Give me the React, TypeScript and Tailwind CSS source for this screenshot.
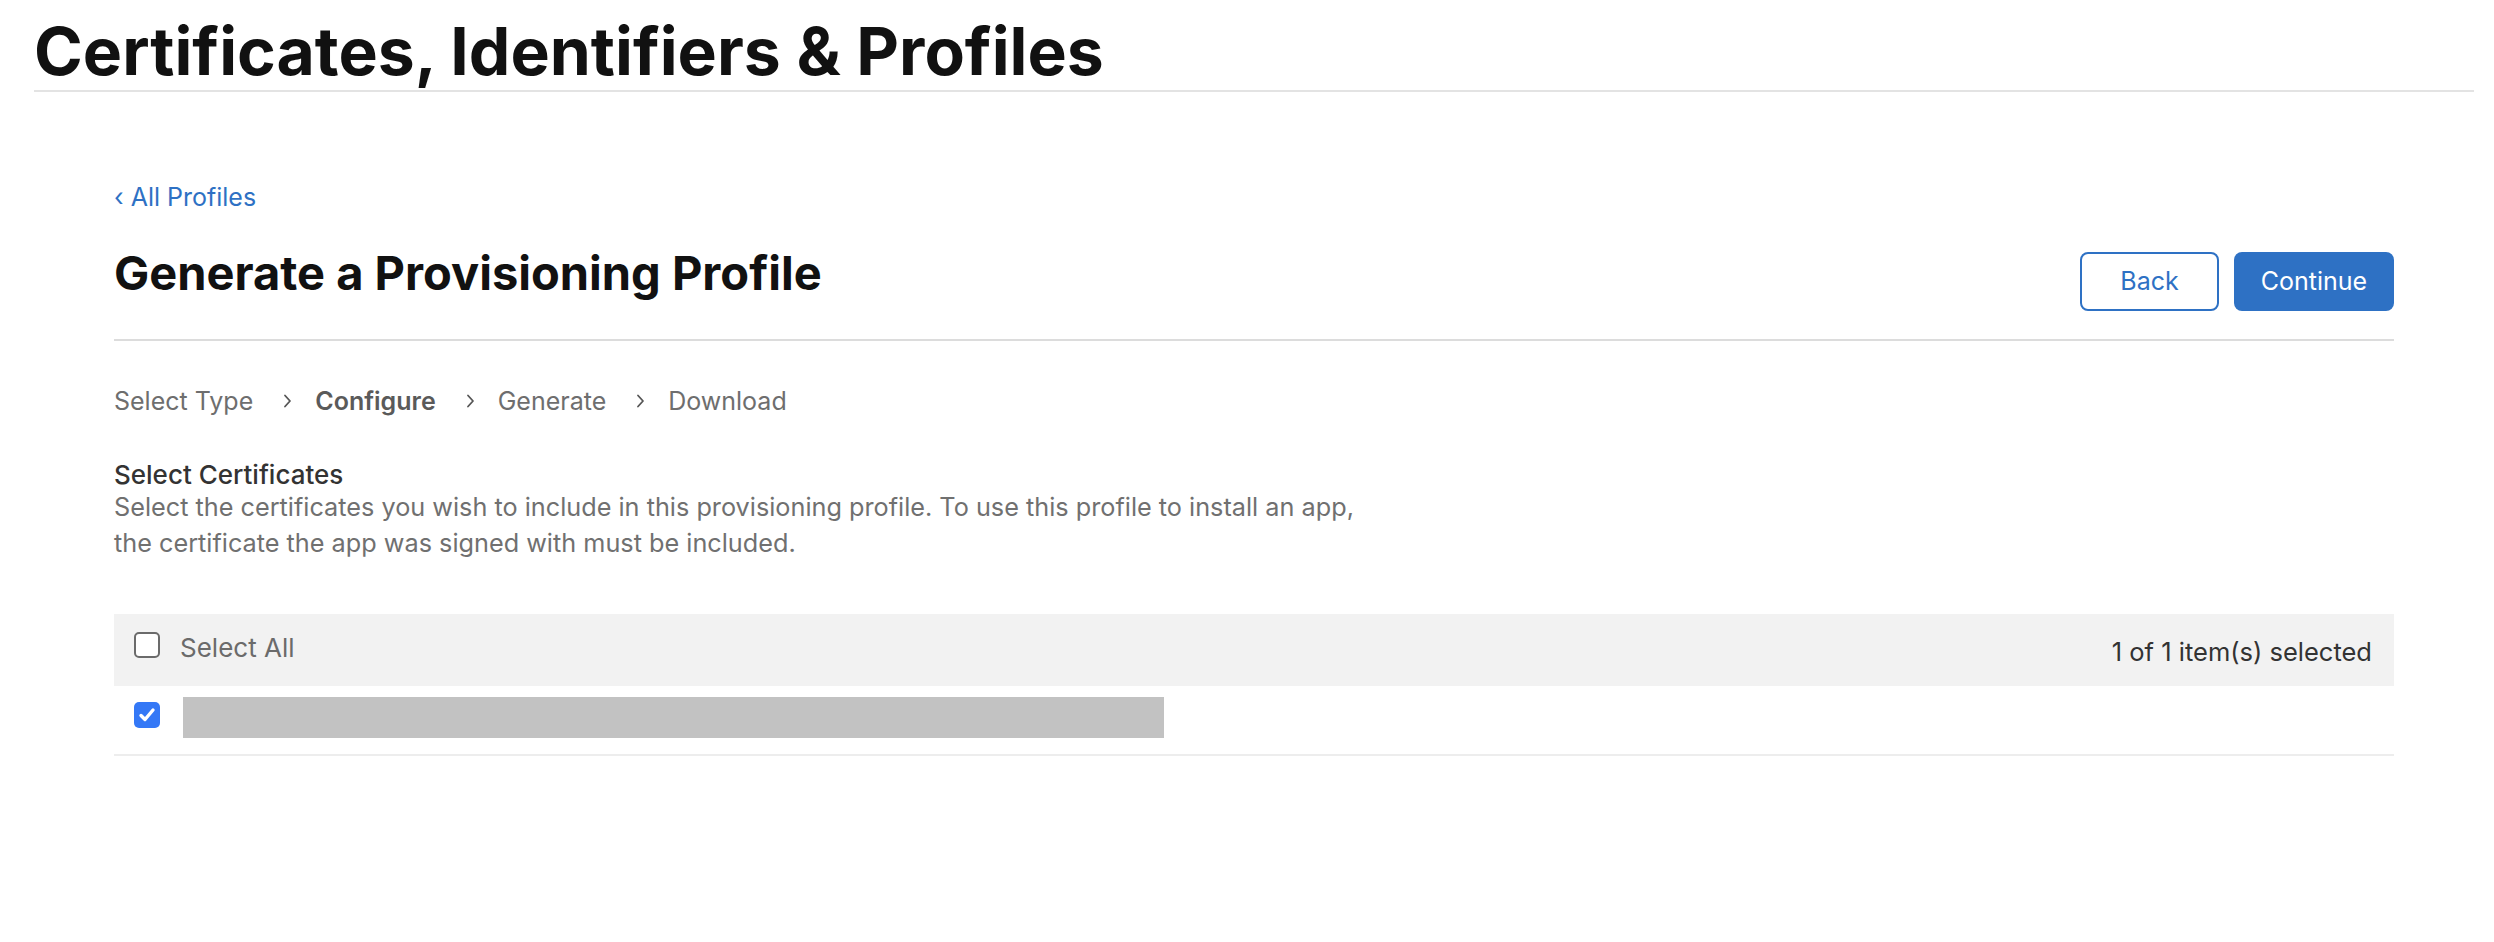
import React from "react";

function Chevron() {
  return (
    <svg width="9" height="14" viewBox="0 0 9 14" className="ml-[30px] mr-[23px] shrink-0">
      <path d="M2 1.5 L7 7 L2 12.5" fill="none" stroke="#555" strokeWidth="1.8" strokeLinecap="round" strokeLinejoin="round" />
    </svg>
  );
}

export default function App() {
  return (
    <div className="min-h-screen bg-white font-['Inter','Noto_Sans',sans-serif] text-[#1d1d1f]">
      <header className="pl-[34px] pr-[20px]">
        <h1 className="text-[66px] font-bold leading-[64px] pt-[19px] pb-[7px] border-b-2 border-[#e3e3e3] text-[#111]">
          Certificates, Identifiers &amp; Profiles
        </h1>
      </header>

      <main className="pl-[114px] pr-[100px] pt-[90px]">
        <a className="block text-[25px] leading-[30px] text-[#2e71c4] w-fit cursor-pointer">
          ‹ All Profiles
        </a>

        <div className="mt-[32px] flex items-start justify-between border-b-2 border-[#dcdcdc] pb-[28px]">
          <h2 className="text-[47px] font-bold leading-[58px] text-[#111]">
            Generate a Provisioning Profile
          </h2>
          <div className="mt-[8px] flex gap-[15px]">
            <button className="h-[59px] w-[139px] rounded-[8px] border-2 border-[#2e71c4] bg-white text-[25px] text-[#2e71c4]">
              Back
            </button>
            <button className="h-[59px] w-[160px] rounded-[8px] bg-[#2e71c4] text-[25px] text-white">
              Continue
            </button>
          </div>
        </div>

        <div className="mt-[45px] flex items-center text-[25px] leading-[30px] text-[#6e6e6e]">
          <span>Select Type</span>
          <Chevron />
          <span className="font-semibold text-[#5a5a5a]">Configure</span>
          <Chevron />
          <span>Generate</span>
          <Chevron />
          <span>Download</span>
        </div>

        <div className="mt-[44px]">
          <div className="text-[26px] leading-[30px] font-medium text-[#333]">Select Certificates</div>
          <p className="text-[25.25px] leading-[35.5px] text-[#707070]">
            Select the certificates you wish to include in this provisioning profile. To use this profile to install an app,
            <br />
            the certificate the app was signed with must be included.
          </p>
        </div>

        <div className="mt-[53px]">
          <div className="flex h-[72px] items-start justify-between bg-[#f2f2f2] pl-[20px] pr-[22px]">
            <div className="flex items-start pt-[18px]">
              <div className="h-[26px] w-[26px] rounded-[5px] border-2 border-[#6b6b6b] bg-white" />
              <span className="ml-[20px] text-[26px] leading-[32px] text-[#6b6b6b]">Select All</span>
            </div>
            <div className="pt-[22px] text-[25.5px] leading-[32px] text-[#333]">1 of 1 item(s) selected</div>
          </div>
          <div className="flex h-[70px] items-start border-b-2 border-[#ededed] pl-[20px]">
            <div className="mt-[16px] flex h-[26px] w-[26px] items-center justify-center rounded-[5px] bg-[#3478f6]">
              <svg width="20" height="20" viewBox="0 0 20 20">
                <path d="M4 10.5 L8 14.5 L16 5" fill="none" stroke="white" strokeWidth="3.4" strokeLinecap="round" strokeLinejoin="round" />
              </svg>
            </div>
            <div className="ml-[23px] mt-[11px] h-[41px] w-[981px] bg-[#c2c2c2]" />
          </div>
        </div>
      </main>
    </div>
  );
}
